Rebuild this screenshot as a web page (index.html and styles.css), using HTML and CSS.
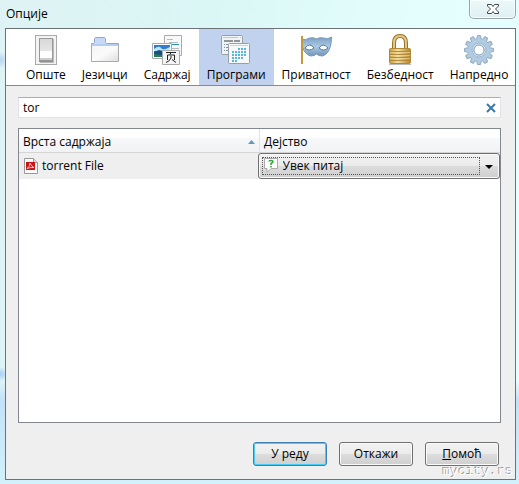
FILE: index.html
```html
<!DOCTYPE html>
<html lang="sr">
<head>
    <meta charset="utf-8">
    <title>Опције</title>
    <link rel="stylesheet" href="styles.css">
</head>
<body>
    <div class="window">
        <header class="titlebar">
            <h1>Опције</h1>
            <button type="button" class="close" aria-label="Затвори">
                <svg width="14" height="12" viewBox="0 0 14 12">
                    <path d="M1.500 1.500h4l1.500 2 1.500-2h4v1.500L9.500 6l3 3v1.500h-4L7 8.500l-1.500 2h-4V9l3-3-3-3z" fill="#fff" stroke="#3f474d"/>
                </svg>
            </button>
        </header>

        <main class="dialog">
            <nav class="tabs">
                <button type="button" class="tab">
                    <svg width="32" height="32" viewBox="0 0 32 32">
                        <defs>
                            <linearGradient id="switch" x2="0" y2="1">
                                <stop offset="0" stop-color="#d8d8d8"/>
                                <stop offset="1" stop-color="#f0f0f0"/>
                            </linearGradient>
                        </defs>
                        <rect x="5.500" y="1.500" width="21" height="29" fill="#f3f3f3" stroke="#aaa"/>
                        <path d="M10 5h14v24H10z" fill="#bbb"/>
                        <path d="M9 4h14v24H9z" fill="#8e8e8e"/>
                        <path d="M9.500 4.500h13v22h-13z" fill="url(#switch)" stroke="#999"/>
                        <path d="M10 17h12v7H10z" fill="#fff"/>
                        <path d="M10 24h12v2H10z" fill="#ccc"/>
                    </svg>
                    <span>Опште</span>
                </button>
                <button type="button" class="tab">
                    <svg width="32" height="32" viewBox="0 0 32 32">
                        <defs>
                            <linearGradient id="folder" x2="1" y2="1">
                                <stop offset="0" stop-color="#f4f4f4"/>
                                <stop offset=".5" stop-color="#fbfbfb"/>
                                <stop offset="1" stop-color="#ddd"/>
                            </linearGradient>
                        </defs>
                        <path d="M2.500 12V9.500h2l1-1v-4l1-1h9l1 1v4l1 1h12V12" fill="#c6daf7" stroke="#94a6c2"/>
                        <path d="M2.500 11.500h27v16h-27z" fill="url(#folder)" stroke="#aaa"/>
                        <path d="M3 10h26v2H3z" fill="#b4cdf0"/>
                    </svg>
                    <span>Језичци</span>
                </button>
                <button type="button" class="tab">
                    <svg width="32" height="32" viewBox="0 0 32 32">
                        <path d="M13.500 1.500h17v20h-17z" fill="#f6f8fa" stroke="#aaa"/>
                        <path d="M16 5.500h6M18 8.500h9M16 14.500h12" stroke="#b3bac0"/>
                        <path d="M19 10.500h9" stroke="#278fa3"/>
                        <path d="M1.500 9.500h19v15h-19z" fill="#fff" stroke="#aaa"/>
                        <path d="M3 11h16v12H3z" fill="#2f7fd0"/>
                        <path d="M3 15q5-4 7-1t9-1v4H3z" fill="#bce4fb"/>
                        <path d="M3 18l5-2 11 3v4H3z" fill="#164f80"/>
                        <path d="M3 20l7 1 9-1v3H3z" fill="#277b57"/>
                        <path d="M11.500 16.500h17v14h-17z" fill="#f4f4f4" stroke="#aaa"/>
                        <path d="M15 18.500h10M20 18.500l-1 2M16.500 26v-5h7v5M20 22v2q-1 3-5 4.500M21 25.500l4 3" fill="none" stroke="#222"/>
                    </svg>
                    <span>Садржај</span>
                </button>
                <button type="button" class="tab active">
                    <svg width="32" height="32" viewBox="0 0 32 32">
                        <rect x="1.500" y="1.500" width="21" height="19" rx="1" fill="#f1f2f3" stroke="#9b9fa5"/>
                        <path d="M3 3.500h15M20 3.500h1" stroke="#c3c8cd"/>
                        <path d="M4 7h9M14 7h6" stroke="#8e959c" stroke-width="2"/>
                        <path d="M4 10.500h1M6 10.500h2M4 13.500h1M6 13.500h2M4 16.500h1M6 16.500h2" stroke="#7f93a6"/>
                        <rect x="8.500" y="9.500" width="21" height="20" rx="1" fill="#f6f8f9" stroke="#999fa6"/>
                        <path d="M10 11.500h18" stroke="#cbd2d9"/>
                        <path d="M18 15h9M12 18h15M12 21h15M12 24h12M12 27h6" stroke="#59b5dc" stroke-width="2" stroke-dasharray="2 1"/>
                    </svg>
                    <span>Програми</span>
                </button>
                <button type="button" class="tab">
                    <svg width="32" height="32" viewBox="0 0 32 32">
                        <defs>
                            <linearGradient id="mask" x2="0" y2="1">
                                <stop offset="0" stop-color="#7ba0c3"/>
                                <stop offset=".5" stop-color="#a9c8e2"/>
                                <stop offset="1" stop-color="#7396b8"/>
                            </linearGradient>
                        </defs>
                        <path d="M1.500 5q4 2 8-1 4-1 7 1 3-2 7-1 4 2 8-1 0 5-1 9-2 8-8 10-4 0-6-2-2 2-6 2-6-2-8-9-1-4-1-8z" fill="url(#mask)" stroke="#7796b5"/>
                        <path d="M5 14q5-6 9 0-5 4-9 0zM19 14q4-6 9 0-4 4-9 0z" fill="#fff" stroke="#58799c"/>
                        <path d="M2 2v28" stroke="#c59a38" stroke-width="2"/>
                    </svg>
                    <span>Приватност</span>
                </button>
                <button type="button" class="tab">
                    <svg width="32" height="32" viewBox="0 0 32 32">
                        <defs>
                            <linearGradient id="brass">
                                <stop offset="0" stop-color="#c99b38"/>
                                <stop offset=".4" stop-color="#f3dda0"/>
                                <stop offset="1" stop-color="#b68326"/>
                            </linearGradient>
                        </defs>
                        <path d="M5 30h22v1H5z" fill="#bbb"/>
                        <path d="M10 15V9q0-7 6-7t6 7v6" fill="none" stroke="#94712d" stroke-width="4"/>
                        <path d="M10 15V9q0-7 6-7t6 7v6" fill="none" stroke="#e5c77d" stroke-width="2"/>
                        <rect x="5.500" y="14.500" width="21" height="15" rx="1" fill="url(#brass)" stroke="#b08838"/>
                        <path d="M6 17.500h20M6 20.500h20M6 23.500h20M6 26.500h20" stroke="#b28b3d"/>
                        <path d="M6 18.500h20M6 21.500h20M6 24.500h20" stroke="#f1d996" stroke-opacity=".6"/>
                    </svg>
                    <span>Безбедност</span>
                </button>
                <button type="button" class="tab">
                    <svg width="32" height="32" viewBox="0 0 32 32">
                        <g fill="#b3cbe0" stroke="#8eabc6">
                            <path id="cog" d="M13.500 6l1-4.500h3l1 4.500v20l-1 4.500h-3l-1-4.500z"/>
                            <use href="#cog" transform="rotate(30 16 16)"/>
                            <use href="#cog" transform="rotate(60 16 16)"/>
                            <use href="#cog" transform="rotate(90 16 16)"/>
                            <use href="#cog" transform="rotate(120 16 16)"/>
                            <use href="#cog" transform="rotate(150 16 16)"/>
                        </g>
                        <circle cx="16" cy="16" r="11" fill="#b3cbe0"/>
                        <circle cx="16" cy="16" r="7" fill="#cfe0ee" stroke="#9db8d1"/>
                        <circle cx="16" cy="16" r="5" fill="#fff" stroke="#7f9dba"/>
                    </svg>
                    <span>Напредно</span>
                </button>
            </nav>

            <div class="pane">
                <div class="search">
                    <input type="text" value="tor" aria-label="Претрага">
                    <button type="button" aria-label="Обриши">
                        <svg width="10" height="10" viewBox="0 0 10 10">
                            <path d="M1 1l8 8M9 1L1 9" stroke="#3c78ac" stroke-width="2"/>
                        </svg>
                    </button>
                </div>

                <div class="list">
                    <table>
                        <thead>
                            <tr>
                                <th>
                                    <div class="heading">
                                        Врста садржаја
                                        <svg width="7" height="4" viewBox="0 0 7 4"><path d="M0 4l3.500-4L7 4z" fill="#5d9cbd"/></svg>
                                    </div>
                                </th>
                                <th>Дејство</th>
                            </tr>
                        </thead>
                        <tbody>
                            <tr>
                                <td>
                                    <div class="type">
                                        <svg width="14" height="16" viewBox="0 0 14 16">
                                            <path d="M.5.5h9l4 4v11H.5z" fill="#fafafa" stroke="#999"/>
                                            <path d="M9.500.5v4h4" fill="#ddd" stroke="#999"/>
                                            <path d="M2 4h9v8H2z" fill="#c91517"/>
                                            <path d="M3 10.500q3-2 3-5.500 1 3 4 4.500-3-.5-7 1z" fill="none" stroke="#fff" stroke-width=".7"/>
                                        </svg>
                                        <label for="action">torrent File</label>
                                    </div>
                                </td>
                                <td>
                                    <div class="dropdown">
                                        <select id="action">
                                            <option>Увек питај</option>
                                        </select>
                                        <svg class="ask" width="14" height="15" viewBox="0 0 14 15">
                                            <path d="M.5.5h13v10H7l-4 4v-4H.5z" fill="#fff" stroke="#aaa"/>
                                            <path d="M5 3.500q0-1 2-1t2 1q0 1-2 2V7M7 8v1.500" fill="none" stroke="#27a737" stroke-width="1.500"/>
                                        </svg>
                                        <svg class="arrow" width="8" height="4" viewBox="0 0 8 4"><path d="M0 0h8L4 4z"/></svg>
                                    </div>
                                </td>
                            </tr>
                        </tbody>
                    </table>
                </div>

                <footer class="buttons">
                    <button type="button" class="default">У реду</button>
                    <button type="button">Откажи</button>
                    <button type="button"><u>П</u>омоћ</button>
                </footer>
            </div>
            <span class="watermark">mycity.rs</span>
        </main>
    </div>
</body>
</html>
```
FILE: styles.css
```css
* {
    box-sizing: border-box;
}
body {
    margin: 0;
    font: 12px/16px "Open Sans", "Noto Sans", sans-serif;
    color: #000;
}
button, input, select {
    font: inherit;
    color: inherit;
}
svg {
    display: block;
    flex: none;
}
.window {
    display: flex;
    flex-direction: column;
    min-height: 100vh;
    padding: 0 3px 4px 5px;
    background:
        radial-gradient(ellipse at 0 60px, #b5d4ef 0, transparent 10px),
        radial-gradient(ellipse at 0 374px, #a8cdf3 0, transparent 10px),
        linear-gradient(transparent 380px, #c3e2f8 400px, #d3f1fa),
        linear-gradient(100deg, #dff3f4 0, #daf6f5 35%, #e4fefe 70%, #e6ffff 100%);
}
.titlebar {
    display: flex;
    justify-content: space-between;
    align-items: flex-start;
    height: 28px;
}
h1 {
    margin: 6px 0 0 1px;
    font-size: 12px;
    font-weight: normal;
}
.close {
    display: flex;
    justify-content: center;
    align-items: center;
    width: 47px;
    height: 19px;
    padding: 0;
    border: 1px solid #99a5ab;
    border-top: 0;
    border-radius: 0 0 5px 5px;
    background: linear-gradient(#edf8f9, #dff0f2);
    box-shadow: inset 0 0 0 1px #f4ffff;
}
.dialog {
    position: relative;
    display: flex;
    flex: 1;
    flex-direction: column;
    border: 1px solid #6b7479;
    background: #efefef;
}

/* toolbar */
.tabs {
    display: flex;
    height: 57px;
    padding-left: 12px;
    border-bottom: 1px solid #8a8a8a;
    background: #fff;
}
.tab {
    display: flex;
    flex-direction: column;
    align-items: center;
    gap: 1px;
    padding: 5px 8px 0;
    border: 0;
    background: none;
    white-space: nowrap;
}
.tab.active {
    background: #c1d2ee;
}

/* content */
.pane {
    display: flex;
    flex: 1;
    flex-direction: column;
    padding: 11px 14px 13px 12px;
}
.search {
    display: flex;
    align-items: center;
    height: 21px;
    padding-right: 4px;
    border: 1px solid #e2e3ea;
    border-top-color: #abadb3;
    background: #fff;
}
.search input {
    flex: 1;
    min-width: 0;
    padding: 0 4px;
    border: 0;
    outline: 0;
    background: none;
}
.search button {
    padding: 0;
    border: 0;
    background: none;
}
.list {
    flex: 1;
    margin-top: 10px;
    border: 1px solid #828790;
    background: #fff;
}
table {
    width: 100%;
    border-collapse: collapse;
    table-layout: fixed;
}
th {
    height: 23px;
    padding: 3px 4px 0;
    border-bottom: 1px solid #d5d5d5;
    background: linear-gradient(#fff 40%, #f7f8fa 40%, #f1f2f4);
    font-weight: normal;
    text-align: left;
}
th + th {
    border-left: 1px solid #dfe3e8;
}
.heading {
    display: flex;
    justify-content: space-between;
    align-items: center;
}
td {
    height: 27px;
    padding: 0;
    background: #efefef;
}
.type {
    display: flex;
    align-items: center;
    gap: 4px;
    padding-left: 5px;
}
.dropdown {
    position: relative;
    margin-left: -2px;
}
.dropdown::after {
    content: "";
    position: absolute;
    inset: 4px 20px 4px 4px;
    border: 1px dotted #555;
    pointer-events: none;
}
.dropdown select {
    display: block;
    appearance: none;
    width: 100%;
    height: 26px;
    padding: 0 24px;
    border: 1px solid #707070;
    border-radius: 3px;
    outline: 0;
    background: linear-gradient(#f2f2f2, #ebebeb 50%, #ddd 50%, #cfcfcf);
    box-shadow: inset 0 0 0 1px #fafafa;
}
.ask, .arrow {
    position: absolute;
    pointer-events: none;
}
.ask {
    top: 5px;
    left: 6px;
}
.arrow {
    top: 12px;
    right: 7px;
}

/* dialog buttons */
.buttons {
    display: flex;
    justify-content: flex-end;
    gap: 12px;
    padding-right: 2px;
    margin-top: 19px;
}
.buttons button {
    width: 74px;
    height: 24px;
    padding: 0;
    border: 1px solid #707070;
    border-radius: 3px;
    background: linear-gradient(#f2f2f2, #ebebeb 50%, #ddd 50%, #cfcfcf);
    box-shadow: inset 0 0 0 1px #fafafa;
}
.buttons .default {
    border-color: #3c7fb1;
    box-shadow: inset 0 0 0 1px #48cdf5;
}
.watermark {
    position: absolute;
    right: 2px;
    bottom: 0;
    color: #fff;
    font: 13px/14px "Liberation Mono", monospace;
    text-shadow: -1px -1px #999;
}
```
